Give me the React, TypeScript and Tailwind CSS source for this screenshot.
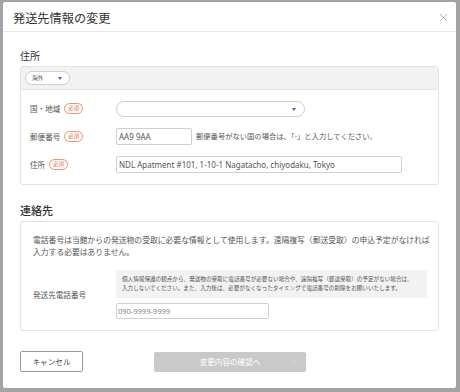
import { X, ChevronRight } from 'lucide-react';

const FONT = { fontFamily: '"Noto Sans CJK JP", "Noto Sans", sans-serif' };
const LATIN = { fontFamily: '"Noto Sans", "Noto Sans CJK JP", sans-serif' };

function Required() {
  return (
    <span className="ml-[4px] inline-flex h-[11px] w-[19px] items-center justify-center rounded-full border border-[#e9936b] text-[5.5px] leading-none text-[#e0703f]">
      必須
    </span>
  );
}

function Caret() {
  return <span className="h-0 w-0 border-x-[2px] border-t-[3px] border-x-transparent border-t-[#3b6ea8]" />;
}

export default function App() {
  return (
    <div className="h-[392px] w-[460px] bg-[#a3a3a3] pt-[2px] pl-[3px]" style={FONT}>
      <div className="flex h-[386px] w-[453px] flex-col rounded-[2px] bg-white text-[#555]">
        {/* Header */}
        <div className="flex h-[30px] items-center justify-between border-b border-[#e8e8e8] pt-[3px] pl-[10px] pr-[6px]">
          <h1 className="text-[12.2px] leading-none font-normal text-[#333]">発送先情報の変更</h1>
          <X size={13} strokeWidth={1} className="-mt-[1px] text-[#777]" />
        </div>

        <div className="flex flex-1 flex-col px-[17px] pt-[17px]">
          {/* 住所 */}
          <h2 className="text-[10px] leading-[14px] text-[#333]">住所</h2>
          <div className="mt-[3px] rounded-[3px] border border-[#e3e3e3]">
            <div className="flex h-[23px] items-center border-b border-[#e6e6e6] bg-[#f2f2f2] px-[4px]">
              <div className="flex h-[14px] w-[45px] items-center justify-between rounded-full border border-[#cfcfcf] bg-white pl-[6px] pr-[7px] text-[5.6px]">
                <span>海外</span>
                <Caret />
              </div>
            </div>
            <div className="flex flex-col gap-[11px] pt-[11px] pb-[11px] pl-[9px] text-[7.6px]">
              <div className="flex h-[16px] items-center">
                <div className="flex w-[86px] items-center">
                  国・地域<Required />
                </div>
                <div className="flex h-[16px] w-[189px] items-center justify-end rounded-full border border-[#cfcfcf] pr-[8px]">
                  <Caret />
                </div>
              </div>
              <div className="flex h-[17px] items-center">
                <div className="flex w-[86px] items-center">
                  郵便番号<Required />
                </div>
                <input
                  readOnly
                  value="AA9 9AA"
                  className="h-[17px] w-[76px] rounded-[2px] border border-[#cfcfcf] px-[2px] text-[8px] text-[#555] outline-none"
                  style={LATIN}
                />
                <span className="ml-[4px] text-[7.3px]">郵便番号がない国の場合は、「-」と入力してください。</span>
              </div>
              <div className="flex h-[17px] items-center">
                <div className="flex w-[86px] items-center">
                  住所<Required />
                </div>
                <input
                  readOnly
                  value="NDL Apatment #101, 1-10-1 Nagatacho, chiyodaku, Tokyo"
                  className="h-[17px] w-[286px] rounded-[2px] border border-[#cfcfcf] px-[2px] text-[8px] text-[#555] outline-none"
                  style={LATIN}
                />
              </div>
            </div>
          </div>

          {/* 連絡先 */}
          <h2 className="mt-[18px] text-[11px] leading-[14px] font-medium text-[#333]">連絡先</h2>
          <div className="mt-[4px] rounded-[3px] border border-[#e3e3e3] pt-[12px] pb-[11px] pl-[12px] pr-[11px]">
            <p className="text-[7.8px] leading-[11.5px] whitespace-nowrap">
              電話番号は当館からの発送物の受取に必要な情報として使用します。遠隔複写（郵送受取）の申込予定がなければ
              <br />
              入力する必要はありません。
            </p>
            <div className="mt-[13px] flex items-center">
              <div className="w-[83px] text-[7.6px]">発送先電話番号</div>
              <div className="flex flex-col">
                <div className="w-[311px] bg-[#f2f2f2] px-[6px] py-[5px] text-[5.6px] leading-[9px] whitespace-nowrap">
                  個人情報保護の観点から、発送物の受取に電話番号が必要ない場合や、遠隔複写（郵送受取）の予定がない場合は、
                  <br />
                  入力しないでください。また、入力後は、必要がなくなったタイミングで電話番号の削除をお願いいたします。
                </div>
                <input
                  readOnly
                  value="090-9999-9999"
                  className="mt-[5px] h-[16px] w-[153px] rounded-[2px] border border-[#cfcfcf] px-[1px] text-[7.5px] text-[#888] outline-none"
                  style={LATIN}
                />
              </div>
            </div>
          </div>

          {/* Buttons */}
          <div className="mt-[20px] flex items-start">
            <button className="h-[21px] w-[63px] rounded-[2px] border border-[#9a9a9a] text-[7.6px] text-[#444]" style={FONT}>
              キャンセル
            </button>
            <button
              className="relative mt-[1px] ml-[71px] flex h-[20px] w-[152px] items-center justify-center rounded-[2px] bg-[#c9c9c9] text-[7.6px] text-white"
              style={FONT}
            >
              変更内容の確認へ
              <ChevronRight size={7} strokeWidth={1.5} className="absolute right-[8px]" />
            </button>
          </div>
        </div>
      </div>
    </div>
  );
}
